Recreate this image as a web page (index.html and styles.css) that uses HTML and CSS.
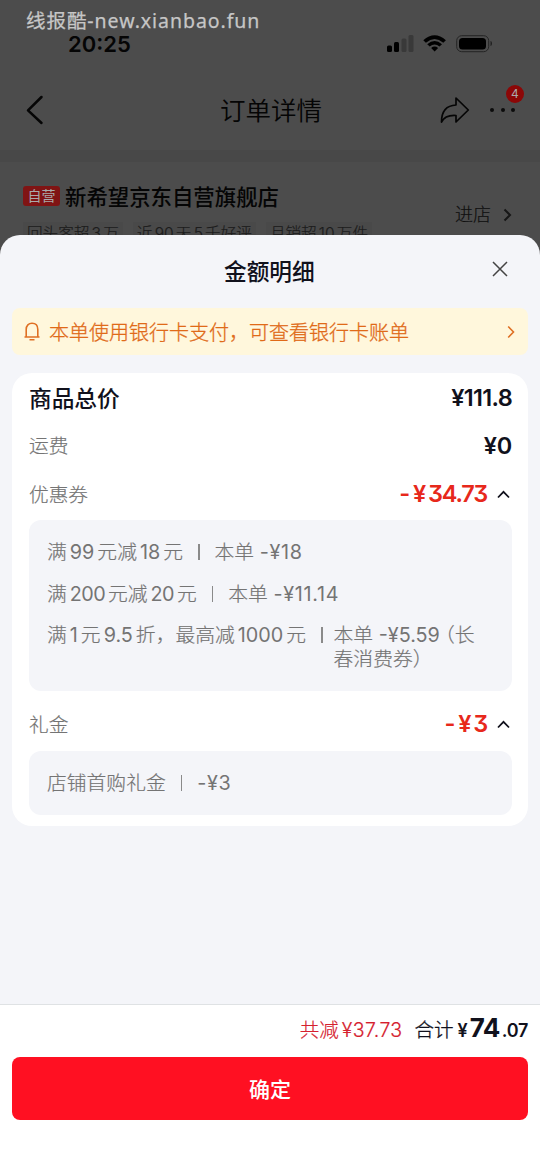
FILE: index.html
```html
<!DOCTYPE html>
<html lang="zh-CN">
<head>
<meta charset="utf-8">
<meta name="viewport" content="width=device-width">
<title>订单详情</title>
<link rel="stylesheet" href="styles.css">
</head>
<body>
<div class="order">
  <div class="watermark">线报酷-new.xianbao.fun</div>
  <div class="status">
    <span class="clock">20:25</span>
    <svg class="status-icons" width="108" height="22" viewBox="0 0 108 22">
      <rect x="1" y="12.500" width="5" height="6.500" rx="1.500"/>
      <rect x="8" y="9" width="5" height="10" rx="1.500"/>
      <g fill="#393939"><rect x="15.500" y="5.500" width="5" height="13.500" rx="1.500"/><rect x="22.500" y="2" width="5" height="17" rx="1.500"/></g>
      <path d="M37.300 7.200Q48.600-2.800 59.900 7.200L57.300 9.800Q48.600 2.400 39.900 9.800ZM41.200 11.200Q48.600 4.800 56 11.200L53.500 13.600Q48.600 9.500 43.700 13.600ZM45.100 15Q48.600 12.200 52.100 15L48.600 18.600Z"/>
      <rect x="70.700" y="2.700" width="32" height="16" rx="5" fill="none" stroke="#242424"/>
      <rect x="73" y="5" width="27" height="11.500" rx="3.500"/>
      <path d="M104.500 8v5c2-.6 2-4.400 0-5z" fill="#202020"/>
    </svg>
  </div>
  <div class="nav">
    <svg class="back" width="18" height="30" viewBox="0 0 18 30"><path d="M15.500 2L2 15.300 15.500 28"/></svg>
    <h1>订单详情</h1>
    <svg class="share" width="30" height="28" viewBox="0 0 30 28"><path d="M16 2L28.300 14 16 26V19.500C8.500 19 4 21 1.500 26C1.500 15.500 6 9.500 16 9Z"/></svg>
    <div class="more"><i></i><i></i><i></i><b>4</b></div>
  </div>
  <div class="shop">
    <div class="shop-info">
      <div class="shop-name"><span class="tag">自营</span><span>新希望京东自营旗舰店</span></div>
      <div class="labels"><span>回头客超<em>3</em>万</span><span>近<em>90</em>天<em>5</em>千好评</span><span>月销超<em>10</em>万件</span></div>
    </div>
    <div class="enter">进店<svg width="9" height="14" viewBox="0 0 9 14"><path d="M1.500 1.500L7 7 1.500 12.500"/></svg></div>
  </div>
</div>

<div class="sheet">
  <div class="sheet-head"><h2>金额明细</h2>
    <svg class="close" width="16" height="16" viewBox="0 0 16 16"><path d="M1 1L15 15M15 1L1 15"/></svg>
  </div>
  <div class="notice">
    <svg class="bell" width="18" height="19" viewBox="0 0 18 19"><path d="M1.500 15H16.500M3.200 15V7.500C3.200 3.500 5.700 1.300 9 1.300S14.800 3.500 14.800 7.500V15M6.500 17.700H11.500"/></svg>
    <span>本单使用银行卡支付，可查看银行卡账单</span>
    <svg class="go" width="8" height="14" viewBox="0 0 8 14"><path d="M1.200 1.500L6.500 7 1.200 12.500"/></svg>
  </div>
  <div class="card">
    <div class="row total"><span>商品总价</span><strong class="price tight">¥111.8</strong></div>
    <div class="row freight"><span>运费</span><strong class="price">¥0</strong></div>
    <div class="row coupon"><span>优惠券</span><strong class="price off">-<span class="yen">¥</span>34.73</strong>
      <svg class="fold" width="13" height="9" viewBox="0 0 13 9"><path d="M1 7.500L6.500 1.800 12 7.500"/></svg></div>
    <div class="details coupons">
      <div class="line"><span>满<em>99</em>元减<em>18</em>元</span><i class="bar"></i><span>本单 <em class="amount wide">-¥18</em></span></div>
      <div class="line"><span>满<em class="narrow">200</em>元减<em class="narrow">20</em>元</span><i class="bar"></i><span>本单 <em class="amount wide">-¥11.14</em></span></div>
      <div class="line last"><span>满<em>1</em>元<em>9.5</em>折，最高减<em>1000</em>元</span><i class="bar"></i><span>本单 <em class="amount">-¥5.59</em><span class="paren">（</span>长<br>春消费券）</span></div>
    </div>
    <div class="row gift"><span>礼金</span><strong class="price off">-<span class="yen">¥</span>3</strong>
      <svg class="fold" width="13" height="9" viewBox="0 0 13 9"><path d="M1 7.500L6.500 1.800 12 7.500"/></svg></div>
    <div class="details gifts"><div class="line"><span>店铺首购礼金</span><i class="bar"></i><span><em class="amount wide">-¥3</em></span></div></div>
  </div>
  <div class="footer">
    <div class="sum"><span class="saved">共减<em>¥37.73</em></span><span class="label">合计</span><strong><small class="sym">¥</small><span class="whole">74</span><small class="cents">.07</small></strong></div>
    <button class="confirm" type="button">确定</button>
  </div>
</div>
</body>
</html>
```
FILE: styles.css
```css
* { box-sizing: border-box; }
body { margin: 0; width: 540px; height: 1174px; overflow: hidden; background: #4c4c4c; font-family: Inter, "Noto Sans CJK SC", sans-serif; color: #11111c; }
h1, h2 { margin: 0; }
em, i { font-style: normal; }
svg { display: block; flex: none; }
span, em, strong { white-space: nowrap; }

.order { height: 255px; overflow: hidden; background: #4c4c4c; color: #050505; }
.watermark { height: 32px; padding: 9px 0 0 26px; font: 400 19.500px/23px "Noto Sans", "Noto Sans CJK SC", sans-serif; letter-spacing: .95px; color: #c6c6c6; -webkit-text-stroke: .25px; }
.status { height: 26px; display: flex; justify-content: space-between; padding: 0 46px 0 68px; }
.clock { font-size: 22px; line-height: 25px; font-weight: 600; letter-spacing: 0; }
.status-icons { margin-top: 1px; }
.nav { height: 92px; display: flex; align-items: center; padding: 12px 24px 0 26px; }
.nav h1 { font-size: 25.500px; font-weight: 350; line-height: 40px; width: 102px; padding-top: 1px; margin-left: 176px; white-space: nowrap; }
.nav svg { fill: none; stroke: #050505; stroke-linejoin: round; }
.back { stroke-width: 2.500; stroke-linecap: round; }
.share { margin-left: 118px; stroke-width: 1.700; }
.more { position: relative; display: flex; gap: 6.500px; margin-left: 20px; }
.more i { width: 4px; height: 4px; border-radius: 50%; background: #0c0c0c; }
.more b { position: absolute; left: 16px; top: -23px; width: 18px; height: 18px; border-radius: 50%; background: #8c0707; color: #aaa; font-size: 12px; line-height: 18px; font-weight: 400; text-align: center; }
.shop { border-top: 12px solid #484848; height: 105px; display: flex; justify-content: space-between; padding: 19px 28px 0 23px; }
.shop-name { display: flex; align-items: center; gap: 5px; height: 30px; font-size: 21.400px; font-weight: 500; line-height: 30px; }
.shop-name > span + span { padding-top: 1px; }
.tag { width: 37px; height: 20px; border-radius: 3px; background: #801414; color: #aaa; font-size: 14px; line-height: 20px; text-align: center; font-weight: 400; }
.labels { display: flex; gap: 10px; margin-top: 11px; }
.labels span { height: 24px; padding: 0 4px; background: #494949; color: #1c1c1c; font-size: 15.600px; line-height: 24px; font-weight: 300; -webkit-text-stroke: .2px; }
.labels em { margin: 0 2.200px; }
.enter { height: 30px; margin-top: 19px; display: flex; align-items: center; gap: 12px; font-size: 18px; font-weight: 300; line-height: 30px; color: #101010; -webkit-text-stroke: .2px; }
.enter svg { fill: none; stroke: #161616; stroke-width: 2; }

.sheet { position: relative; height: 939px; margin-top: -20px; padding: 0 12px; display: flex; flex-direction: column; border-radius: 20px 20px 0 0; background: #f4f5f9; overflow: hidden; }
.sheet-head { height: 73px; flex: none; display: flex; align-items: flex-start; }
.sheet-head h2 { font-size: 22.700px; font-weight: 500; line-height: 34px; margin: 20px 0 0 212px; width: 92px; white-space: nowrap; }
.close { margin: 26px 0 0 176px; fill: none; stroke: #444; stroke-width: 1.500; }
.notice { height: 47px; flex: none; display: flex; align-items: center; padding: 0 13px 0 11px; border-radius: 8px; background: #fff7dc; color: #e06a18; font-size: 20px; line-height: 30px; font-weight: 300; -webkit-text-stroke: .3px; }
.notice svg { fill: none; stroke: #df7024; stroke-width: 1.600; }
.notice span { margin: 0 auto 0 8px; padding-top: 2px; }
.card { height: 453px; flex: none; margin-top: 18px; padding: 0 16px 0 17px; background: #fff; border-radius: 20px; }
.row { display: flex; align-items: center; font-size: 19.700px; font-weight: 300; color: #747474; }
.row > span { margin-right: auto; padding-bottom: 2px; -webkit-text-stroke: .2px; }
.price { font-size: 23.500px; line-height: 30px; font-weight: 600; color: #11111c; font-feature-settings: "cv09"; letter-spacing: -.2px; }
.total { height: 50px; }
.total > span { font-size: 22.700px; font-weight: 500; color: #11111c; -webkit-text-stroke: 0; }
.price.tight { letter-spacing: -.7px; }
.freight { height: 45px; }
.coupon { height: 52px; }
.price.off { color: #e7281b; letter-spacing: -1.200px; }
.yen { margin: 0 3px 0 4px; }
.fold { margin: 0 2px 0 10px; fill: none; stroke: #11111c; stroke-width: 1.800; }
.details { background: #f4f5f9; border-radius: 12px; padding: 0 18px; color: #747474; font-size: 19.800px; font-weight: 300; line-height: 24px; -webkit-text-stroke: .2px; }
.coupons { height: 171px; padding-top: 20px; }
.line { height: 41.500px; display: flex; align-items: flex-start; }
.line em { margin: 0 3px; font-weight: 400; -webkit-text-stroke: 0; }
.line .narrow { letter-spacing: -.6px; }
.line .amount { margin: 0; }
.line .wide { letter-spacing: .7px; }
.paren { font-feature-settings: "halt"; margin-left: 5px; }
.bar { width: 1.500px; height: 16px; margin: 4px 15px 0; background: #8a8a8a; flex: none; }
.last { height: 60px; }
.last .bar { margin-right: 11px; }
.gift { height: 60px; padding-top: 6px; }
.gifts { height: 64px; padding-top: 20px; }

.footer { margin: auto -12px 0; height: 170px; padding: 0 12px; background: #fff; border-top: 1px solid #dfe2e4; }
.sum { height: 52px; display: flex; justify-content: flex-end; align-items: baseline; line-height: 45px; font-size: 19.500px; font-weight: 300; }
.saved { color: #d5202e; margin-right: 12px; -webkit-text-stroke: .2px; }
.saved em { margin-left: 3px; letter-spacing: .4px; }
.label { margin-right: 4px; -webkit-text-stroke: .3px; }
.sum strong { font-weight: 600; }
.sym, .cents { font-size: 18px; }
.sym { margin-right: 2px; }
.whole { font-size: 26px; font-weight: 700; letter-spacing: -.6px; margin-right: 2px; }
.cents { letter-spacing: -.3px; }
.confirm { display: block; width: 516px; height: 63px; border: 0; border-radius: 8px; background: #ff1022; color: #fff; font: 500 21px/63px "Noto Sans CJK SC", sans-serif; padding: 0; }
```
